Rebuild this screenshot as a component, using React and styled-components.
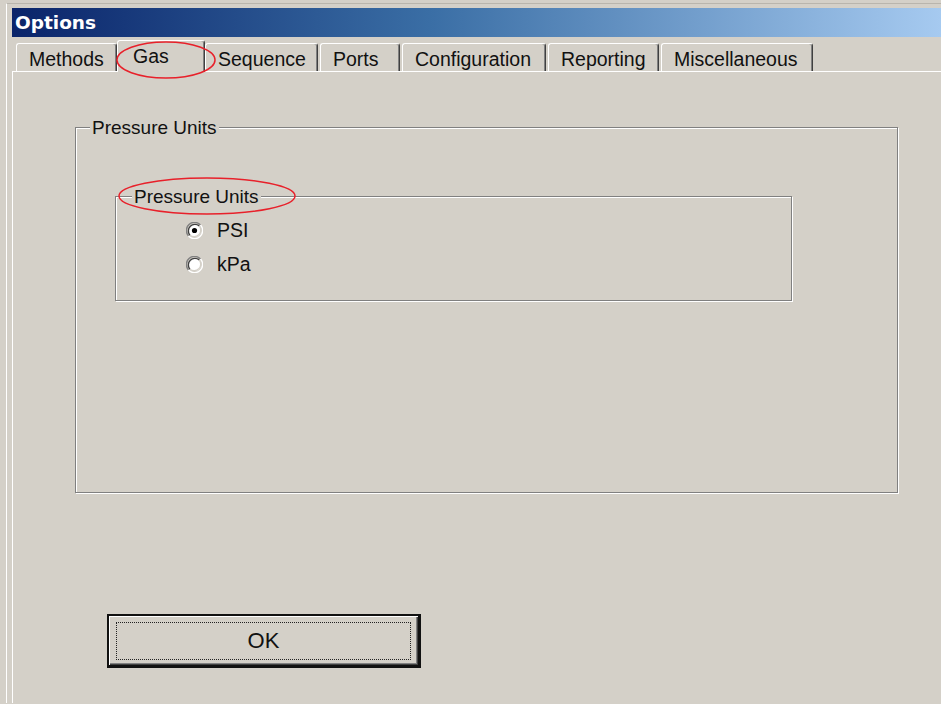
import React, { useState } from "react";
import styled, { createGlobalStyle } from "styled-components";

const Global = createGlobalStyle`
  html, body { margin: 0; padding: 0; background: #d4d0c8; }
  body { font-family: "Liberation Sans", Arial, sans-serif; color: #111; }
`;

const Screen = styled.div`
  position: relative;
  min-height: 704px;
  background: #d4d0c8;
  padding: 3px 0 0 6px;
  box-sizing: border-box;
  overflow: hidden;
`;

const Window = styled.div`
  border-top: 1px solid #b9b5ad;
  border-left: 1px solid #ffffff;
  padding: 4px 0 0 5px;
  display: flex;
  flex-direction: column;
  min-height: 700px;
  box-sizing: border-box;
`;

const TitleBar = styled.div`
  height: 29px;
  display: flex;
  align-items: center;
  padding-left: 3px;
  background: linear-gradient(to right, #0a246a 0%, #3a6ea5 45%, #a6caf0 100%);
  color: #fff;
  font-family: "DejaVu Sans", Verdana, sans-serif;
  font-weight: bold;
  font-size: 18.5px;
`;

const TabStrip = styled.div`
  height: 34px;
  display: flex;
  align-items: flex-end;
  gap: 2px;
  padding-left: 4px;
`;

const Tab = styled.div`
  position: relative;
  z-index: ${(p) => (p.$active ? 2 : 1)};
  width: ${(p) => p.$w}px;
  height: ${(p) => (p.$active ? 32 : 28)}px;
  margin: 0 ${(p) => (p.$active ? "-2px -1px -2px" : "0")};
  box-sizing: border-box;
  padding: ${(p) => (p.$active ? "5px 0 0 15px" : "5px 0 0 12px")};
  background: #d4d0c8;
  border-top: 1px solid #ffffff;
  border-left: 1px solid #ffffff;
  border-right: 1px solid #404040;
  border-radius: 3px 3px 0 0;
  box-shadow: inset -1px 0 0 #808080;
  font-size: 19.5px;
  line-height: 20px;
  white-space: nowrap;
`;

const Panel = styled.div`
  flex: 1;
  border-top: 1px solid #ffffff;
  border-left: 1px solid #ffffff;
  padding: 55px 0 0 62px;
  display: flex;
  flex-direction: column;
  align-items: flex-start;
`;

const Group = styled.div`
  width: ${(p) => p.$w}px;
  height: ${(p) => p.$h}px;
  box-sizing: border-box;
  border: 1px solid #808080;
  box-shadow: inset 1px 1px 0 #ffffff, 1px 1px 0 #ffffff;
  padding-left: ${(p) => p.$pad}px;
  display: flex;
  flex-direction: column;
  align-items: flex-start;
`;

const GroupLabel = styled.div`
  margin-top: -11px;
  height: 22px;
  padding: 0 2px;
  background: #d4d0c8;
  font-size: 19px;
  line-height: 22px;
  white-space: nowrap;
`;

const Inner = styled.div`
  margin-left: ${(p) => p.$ml}px;
  margin-top: ${(p) => p.$mt}px;
  align-self: stretch;
  display: flex;
  flex-direction: column;
`;

const RadioList = styled.div`
  margin-top: 5px;
  padding-left: 54px;
  display: flex;
  flex-direction: column;
`;

const RadioRow = styled.label`
  height: 34px;
  display: flex;
  align-items: center;
  gap: 14px;
  font-size: 19.5px;
  cursor: default;
`;

const OkButton = styled.button`
  width: 314px;
  height: 54px;
  margin: 121px 0 0 32px;
  padding: 6px 7px 5px 7px;
  box-sizing: border-box;
  background: #d4d0c8;
  border: 2px solid #111;
  border-width: 2px 3px 3px 2px;
  box-shadow: inset 1px 1px 0 #ffffff, inset -1px -1px 0 #404040, inset -2px -2px 0 #808080;
  font-family: "Liberation Sans", Arial, sans-serif;
  font-size: 22px;
  color: #111;
  display: flex;
`;

const FocusRect = styled.span`
  flex: 1;
  border: 1px dotted #222;
  display: flex;
  align-items: center;
  justify-content: center;
`;

const Marks = styled.svg`
  position: absolute;
  left: 0;
  top: 0;
  z-index: 10;
  pointer-events: none;
`;

function RadioDot({ checked }) {
  return (
    <svg width="17" height="17" viewBox="0 0 17 17">
      <path d="M14.5 3 A8 8 0 0 0 2.5 14" fill="none" stroke="#808080" strokeWidth="1.4" />
      <path d="M2.5 14 A8 8 0 0 0 14.5 3" fill="none" stroke="#ffffff" strokeWidth="1.4" />
      <circle cx="8.5" cy="8.5" r="6.6" fill="#ffffff" />
      <path d="M13.2 3.9 A6.6 6.6 0 0 0 3.9 13.2" fill="none" stroke="#404040" strokeWidth="1.4" />
      <path d="M3.9 13.2 A6.6 6.6 0 0 0 13.2 3.9" fill="none" stroke="#d4d0c8" strokeWidth="1.4" />
      {checked && <circle cx="8.5" cy="8.5" r="2.6" fill="#000" />}
    </svg>
  );
}

const tabs = [
  { name: "Methods", w: 101 },
  { name: "Gas", w: 88, active: true },
  { name: "Sequence", w: 113 },
  { name: "Ports", w: 80 },
  { name: "Configuration", w: 144 },
  { name: "Reporting", w: 111 },
  { name: "Miscellaneous", w: 152 },
];

export default function App() {
  const [unit, setUnit] = useState("PSI");
  return (
    <>
      <Global />
      <Screen>
        <Window>
          <TitleBar>Options</TitleBar>
          <TabStrip>
            {tabs.map((t) => (
              <Tab key={t.name} $w={t.w} $active={t.active}>
                {t.name}
              </Tab>
            ))}
          </TabStrip>
          <Panel>
            <Group $w={823} $h={366} $pad={14}>
              <GroupLabel>Pressure Units</GroupLabel>
              <Inner $ml={25} $mt={57}>
                <Group $w={677} $h={105} $pad={16}>
                  <GroupLabel>Pressure Units</GroupLabel>
                  <RadioList>
                    {["PSI", "kPa"].map((u) => (
                      <RadioRow key={u} onClick={() => setUnit(u)}>
                        <RadioDot checked={unit === u} />
                        {u}
                      </RadioRow>
                    ))}
                  </RadioList>
                </Group>
              </Inner>
            </Group>
            <OkButton>
              <FocusRect>OK</FocusRect>
            </OkButton>
          </Panel>
        </Window>
        <Marks width="941" height="704">
          <ellipse cx="166" cy="60" rx="49" ry="18" fill="none" stroke="#e8202a" strokeWidth="1.5" />
          <ellipse cx="207" cy="196" rx="88" ry="18" fill="none" stroke="#e8202a" strokeWidth="1.5" />
        </Marks>
      </Screen>
    </>
  );
}
